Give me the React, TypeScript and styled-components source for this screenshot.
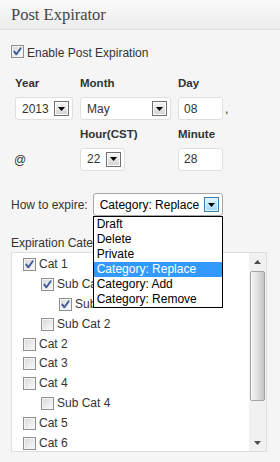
import React from "react";
import styled, { createGlobalStyle } from "styled-components";

const Global = createGlobalStyle`
  html, body { margin: 0; padding: 0; }
  body {
    background: #f5f5f5;
    font-family: "Liberation Sans", Arial, sans-serif;
    font-size: 12px;
    color: #333;
  }
`;

const Panel = styled.div`
  width: 280px;
  height: 462px;
  background: #f5f5f5;
  overflow: hidden;
`;

const Header = styled.h3`
  margin: 0;
  height: 28px;
  padding: 1px 0 0 11px;
  line-height: 28px;
  font-family: "Liberation Serif", "Times New Roman", serif;
  font-weight: normal;
  font-size: 16.5px;
  color: #464646;
  background: linear-gradient(to bottom, #f9f9f9, #ececec);
  border-bottom: 1px solid #dfdfdf;
`;

const Content = styled.div`
  padding: 0 12px 0 11px;
`;

const EnableRow = styled.div`
  margin-top: 15px;
  height: 13px;
  display: flex;
  align-items: center;
  gap: 3px;
`;

const RowText = styled.span<{ $shift?: number }>`
  line-height: 14px;
  padding-top: ${(p) => (p.$shift && p.$shift > 0 ? p.$shift : 0)}px;
  padding-bottom: ${(p) => (p.$shift && p.$shift < 0 ? -p.$shift : 0)}px;
  white-space: nowrap;
`;

const Box = styled.span`
  flex: none;
  width: 13px;
  height: 13px;
  box-sizing: border-box;
  border: 1px solid #8e8f8f;
  background: linear-gradient(135deg, #d6d6d6 0%, #e8e8e8 45%, #fbfbfb 100%);
  box-shadow: inset 0 0 0 1px #f4f4f4;
  display: flex;
  align-items: center;
  justify-content: center;
`;

const Check = ({ checked }: { checked?: boolean }) => (
  <Box>
    {checked && (
      <svg width="11" height="11" viewBox="0 0 11 11">
        <path
          d="M2.3 5.6 L4.4 8.3 L8.7 2.2"
          fill="none"
          stroke="#3d5a9e"
          strokeWidth="1.9"
          strokeLinecap="round"
          strokeLinejoin="round"
        />
      </svg>
    )}
  </Box>
);

const DateGrid = styled.div`
  margin: 18px 0 0 4px;
  display: grid;
  grid-template-columns: 65px 98px 1fr;
  row-gap: 6.5px;
`;

const Field = styled.div`
  display: flex;
  flex-direction: column;
  gap: 7px;
`;

const FieldLabel = styled.div`
  font-weight: bold;
  font-size: 11.5px;
  line-height: 14px;
  color: #333;
`;

const AtCell = styled.div`
  display: flex;
  align-items: flex-end;
  padding-bottom: 4px;
  margin-left: -1px;
  line-height: 14px;
`;

const FakeSelect = styled.div<{ $width: number; $focus?: boolean }>`
  width: ${(p) => p.$width}px;
  height: 23px;
  box-sizing: border-box;
  border: 1px solid ${(p) => (p.$focus ? "#a6a6a6" : "#dfdfdf")};
  border-radius: 3px;
  background: #fff;
  padding: 0 3px 0 6px;
  display: flex;
  align-items: center;
  justify-content: space-between;
  font-size: 12px;
  color: ${(p) => (p.$focus ? "#000" : "#333")};
  position: relative;
  white-space: nowrap;
`;

const ArrowBtn = styled.span<{ $focus?: boolean }>`
  flex: none;
  width: 15px;
  height: 15px;
  box-sizing: border-box;
  border: 1px solid ${(p) => (p.$focus ? "#3c7fb1" : "#707070")};
  background: ${(p) =>
    p.$focus
      ? "linear-gradient(to bottom, #eaf6fd, #bee6fd 50%, #a7d9f5)"
      : "linear-gradient(to bottom, #f6f6f6, #e4e4e4 50%, #d4d4d4)"};
  box-shadow: inset 0 0 0 1px ${(p) => (p.$focus ? "#dff2fc" : "#fcfcfc")};
  display: flex;
  align-items: center;
  justify-content: center;
`;

const Tri = ({ up, color = "#000" }: { up?: boolean; color?: string }) => (
  <svg width="7" height="4" viewBox="0 0 7 4">
    <polygon points={up ? "0,4 7,4 3.5,0" : "0,0 7,0 3.5,4"} fill={color} />
  </svg>
);

const Select = ({
  width,
  value,
  focus,
  children,
}: {
  width: number;
  value: string;
  focus?: boolean;
  children?: React.ReactNode;
}) => (
  <FakeSelect $width={width} $focus={focus}>
    <span>{value}</span>
    <ArrowBtn $focus={focus}>
      <Tri />
    </ArrowBtn>
    {children}
  </FakeSelect>
);

const InputRow = styled.div`
  display: flex;
  align-items: center;
  gap: 2px;
  line-height: 14px;
`;

const TextInput = styled.div`
  width: 45px;
  height: 23px;
  box-sizing: border-box;
  border: 1px solid #dfdfdf;
  border-radius: 3px;
  background: #fff;
  padding-left: 5px;
  display: flex;
  align-items: center;
  font-size: 12px;
  color: #333;
`;

const ExpireRow = styled.div`
  margin-top: 22.5px;
  display: flex;
  align-items: center;
  gap: 5px;
`;

const DropList = styled.ul`
  position: absolute;
  top: calc(100% + 1px);
  left: -1px;
  width: 130px;
  box-sizing: border-box;
  margin: 0;
  padding: 0;
  list-style: none;
  border: 1px solid #000;
  background: #fff;
  z-index: 5;
`;

const DropItem = styled.li<{ $active?: boolean }>`
  height: 15px;
  line-height: 15px;
  padding-left: 3px;
  font-size: 12px;
  color: ${(p) => (p.$active ? "#fff" : "#000")};
  background: ${(p) => (p.$active ? "#3399ff" : "transparent")};
`;

const CatLabel = styled.div`
  margin-top: 20px;
  line-height: 14px;
`;

const CatBox = styled.div`
  margin-top: 2px;
  width: 256px;
  height: 200px;
  box-sizing: border-box;
  border: 1px solid #dfdfdf;
  background: #fff;
  display: flex;
  overflow: hidden;
`;

const CatList = styled.div`
  flex: 1;
  padding: 2px 0 0 11px;
`;

const CatRow = styled.div<{ $depth: number }>`
  height: 19.8px;
  display: flex;
  align-items: center;
  gap: 3px;
  padding-left: ${(p) => p.$depth * 18}px;
`;

const Scrollbar = styled.div`
  flex: none;
  width: 17px;
  background: #f1f1f1;
  display: flex;
  flex-direction: column;
`;

const ScrollBtn = styled.div`
  height: 17px;
  display: flex;
  align-items: center;
  justify-content: center;
`;

const Thumb = styled.div`
  margin: 1px 1px 0 1px;
  height: 130px;
  box-sizing: border-box;
  border: 1px solid #a3a3a3;
  border-radius: 2px;
  background: linear-gradient(to right, #f3f3f3 0%, #e6e6e6 40%, #d2d2d2 75%, #c6c6c6 100%);
  box-shadow: inset 1px 0 0 #fcfcfc;
`;

const Track = styled.div`
  flex: 1;
`;

const cats: { name: string; depth: number; checked?: boolean }[] = [
  { name: "Cat 1", depth: 0, checked: true },
  { name: "Sub Cat 1", depth: 1, checked: true },
  { name: "Sub Sub Cat 1", depth: 2, checked: true },
  { name: "Sub Cat 2", depth: 1 },
  { name: "Cat 2", depth: 0 },
  { name: "Cat 3", depth: 0 },
  { name: "Cat 4", depth: 0 },
  { name: "Sub Cat 4", depth: 1 },
  { name: "Cat 5", depth: 0 },
  { name: "Cat 6", depth: 0 },
];

const options = ["Draft", "Delete", "Private", "Category: Replace", "Category: Add", "Category: Remove"];

export default function App() {
  return (
    <>
      <Global />
      <Panel>
        <Header>Post Expirator</Header>
        <Content>
          <EnableRow>
            <Check checked />
            <RowText $shift={2}>Enable Post Expiration</RowText>
          </EnableRow>

          <DateGrid>
            <Field>
              <FieldLabel>Year</FieldLabel>
              <Select width={58} value="2013" />
            </Field>
            <Field>
              <FieldLabel>Month</FieldLabel>
              <Select width={91} value="May" />
            </Field>
            <Field>
              <FieldLabel>Day</FieldLabel>
              <InputRow>
                <TextInput>08</TextInput>
                <span>,</span>
              </InputRow>
            </Field>
            <AtCell>@</AtCell>
            <Field>
              <FieldLabel>Hour(CST)</FieldLabel>
              <Select width={45} value="22" />
            </Field>
            <Field>
              <FieldLabel>Minute</FieldLabel>
              <TextInput>28</TextInput>
            </Field>
          </DateGrid>

          <ExpireRow>
            <RowText>How to expire:</RowText>
            <Select width={130} value="Category: Replace" focus>
              <DropList>
                {options.map((o) => (
                  <DropItem key={o} $active={o === "Category: Replace"}>
                    {o}
                  </DropItem>
                ))}
              </DropList>
            </Select>
          </ExpireRow>

          <CatLabel>Expiration Categories</CatLabel>
          <CatBox>
            <CatList>
              {cats.map((c) => (
                <CatRow key={c.name} $depth={c.depth}>
                  <Check checked={c.checked} />
                  <RowText $shift={-1}>{c.name}</RowText>
                </CatRow>
              ))}
            </CatList>
            <Scrollbar>
              <ScrollBtn>
                <Tri up color="#4d4d4d" />
              </ScrollBtn>
              <Thumb />
              <Track />
              <ScrollBtn>
                <Tri color="#4d4d4d" />
              </ScrollBtn>
            </Scrollbar>
          </CatBox>
        </Content>
      </Panel>
    </>
  );
}
